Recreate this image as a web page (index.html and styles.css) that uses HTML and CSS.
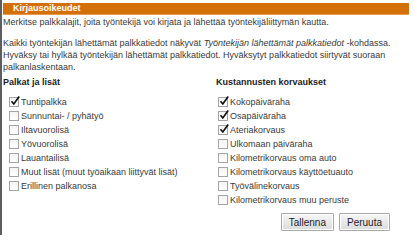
FILE: index.html
```html
<!DOCTYPE html>
<html lang="fi">
<head>
<meta charset="utf-8">
<title>Kirjausoikeudet</title>
<link rel="stylesheet" href="styles.css">
</head>
<body>
<div class="window">
  <div class="titlebar">Kirjausoikeudet</div>
  <p class="intro">Merkitse palkkalajit, joita työntekijä voi kirjata ja lähettää työntekijäliittymän kautta.</p>
  <p class="intro second">Kaikki työntekijän lähettämät palkkatiedot näkyvät <em>Työntekijän lähettämät palkkatiedot</em> -kohdassa.<br>Hyväksy tai hylkää työntekijän lähettämät palkkatiedot. Hyväksytyt palkkatiedot siirtyvät suoraan<br>palkanlaskentaan.</p>
  <div class="columns">
    <div class="col left">
      <h3 class="heading">Palkat ja lisät</h3>
      <ul class="checks">
        <li><span class="box checked"><svg viewBox="0 0 12 12"><path d="M1.8 6.2 L4.6 9.6 L11 0.6"/></svg></span>Tuntipalkka</li>
        <li><span class="box"></span>Sunnuntai- / pyhätyö</li>
        <li><span class="box"></span>Iltavuorolisä</li>
        <li><span class="box"></span>Yövuorolisä</li>
        <li><span class="box"></span>Lauantailisä</li>
        <li><span class="box"></span>Muut lisät (muut työaikaan liittyvät lisät)</li>
        <li><span class="box"></span>Erillinen palkanosa</li>
      </ul>
    </div>
    <div class="col right">
      <h3 class="heading">Kustannusten korvaukset</h3>
      <ul class="checks">
        <li><span class="box checked"><svg viewBox="0 0 12 12"><path d="M1.8 6.2 L4.6 9.6 L11 0.6"/></svg></span>Kokopäiväraha</li>
        <li><span class="box checked"><svg viewBox="0 0 12 12"><path d="M1.8 6.2 L4.6 9.6 L11 0.6"/></svg></span>Osapäiväraha</li>
        <li><span class="box checked"><svg viewBox="0 0 12 12"><path d="M1.8 6.2 L4.6 9.6 L11 0.6"/></svg></span>Ateriakorvaus</li>
        <li><span class="box"></span>Ulkomaan päiväraha</li>
        <li><span class="box"></span>Kilometrikorvaus oma auto</li>
        <li><span class="box"></span>Kilometrikorvaus käyttöetuauto</li>
        <li><span class="box"></span>Työvälinekorvaus</li>
        <li><span class="box"></span>Kilometrikorvaus muu peruste</li>
      </ul>
      <div class="buttons">
        <button class="btn" type="button">Tallenna</button>
        <button class="btn" type="button">Peruuta</button>
      </div>
    </div>
  </div>
</div>
</body>
</html>
```
FILE: styles.css
```css
html, body {
  margin: 0;
  padding: 0;
  background: #ffffff;
}

body {
  font-family: "Liberation Sans", Arial, sans-serif;
  font-size: 9px;
  color: #3a3a3a;
}

.window {
  box-sizing: border-box;
  height: 235px;
  width: 414px;
  border-left: 2px solid #5e5e5e;
  padding: 3px 5px 0 1px;
  display: flex;
  flex-direction: column;
}

.titlebar {
  height: 11px;
  line-height: 11px;
  background: #d4700a;
  border-bottom: 1px solid #e59a4a;
  color: #ffffff;
  font-weight: bold;
  font-size: 9px;
  padding-left: 10px;
}

.intro {
  margin: 1px 0 0 0;
  line-height: 12px;
}

.intro.second {
  margin-top: 9px;
}

.columns {
  display: grid;
  grid-template-columns: 212px 1fr;
  margin-top: 3px;
}

.heading {
  margin: 0;
  font-size: 9px;
  line-height: 12px;
  font-weight: bold;
  color: #222222;
}

.right .heading {
  padding-left: 1px;
}

.checks {
  list-style: none;
  margin: 7px 0 0 0;
  padding: 0 0 0 6px;
}

.right .checks {
  padding-left: 3px;
}

.checks li {
  height: 14px;
  display: flex;
  align-items: center;
  white-space: nowrap;
}

.box {
  position: relative;
  box-sizing: border-box;
  width: 10px;
  height: 10px;
  border: 1px solid #a4a4a4;
  background: linear-gradient(#f4f4f4, #ffffff);
  margin-right: 2px;
  flex: none;
}

.box svg {
  position: absolute;
  left: 0px;
  top: -2px;
  width: 10px;
  height: 10px;
  overflow: visible;
}

.box svg path {
  fill: none;
  stroke: #111111;
  stroke-width: 2;
  stroke-linejoin: miter;
}

.buttons {
  display: flex;
  justify-content: flex-end;
  gap: 5px;
  margin-top: 6px;
  padding-right: 19px;
}

.btn {
  height: 18px;
  padding: 0 7px;
  font-family: "Liberation Sans", Arial, sans-serif;
  font-size: 10px;
  color: #222222;
  border: 1px solid #a8a8a8;
  border-radius: 1px;
  background: linear-gradient(#f6f6f6, #dcdcdc);
  box-shadow: inset 0 0 0 1px #ffffff;
}
```
